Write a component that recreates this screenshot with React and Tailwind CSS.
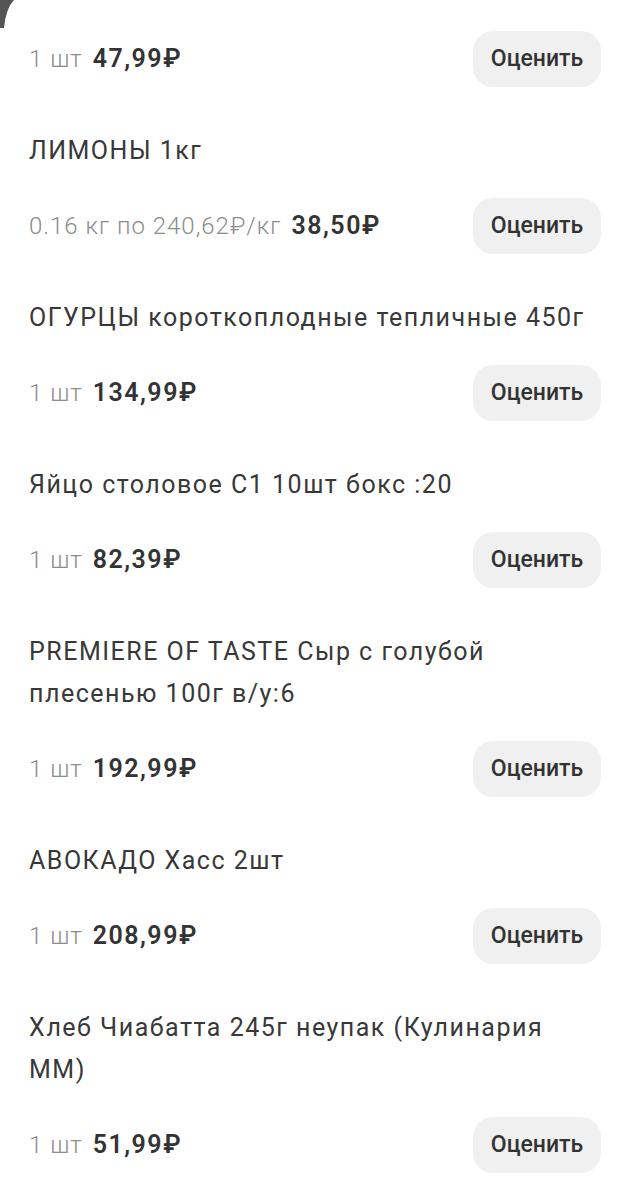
const items = [
  { title: null, qty: "1 шт", price: "47,99₽" },
  { title: "ЛИМОНЫ 1кг", qty: "0.16 кг по 240,62₽/кг", price: "38,50₽" },
  { title: "ОГУРЦЫ короткоплодные тепличные 450г", qty: "1 шт", price: "134,99₽" },
  { title: "Яйцо столовое С1 10шт бокс :20", qty: "1 шт", price: "82,39₽" },
  { title: "PREMIERE OF TASTE Сыр с голубой плесенью 100г в/у:6", qty: "1 шт", price: "192,99₽" },
  { title: "АВОКАДО Хасс 2шт", qty: "1 шт", price: "208,99₽" },
  { title: "Хлеб Чиабатта 245г неупак (Кулинария ММ)", qty: "1 шт", price: "51,99₽" },
];

const Item = ({ item, first }) => (
  <div className={first ? "pt-[31px]" : "pt-[43px]"}>
    {item.title && (
      <div className="text-[25px] leading-[42px] tracking-[1.5px] text-[#383838] mb-[26px]">
        {item.title}
      </div>
    )}
    <div className="flex items-center justify-between h-[56px]">
      <div className="flex items-baseline gap-[10px]">
        <span className="text-[24px] font-light tracking-[1px] text-[#8c8c8c]">{item.qty}</span>
        <span className="text-[25px] font-semibold tracking-[1.5px] text-[#333333]">{item.price}</span>
      </div>
      <button className="w-[128px] h-[56px] rounded-[20px] bg-[#f0f0f0] text-[23px] font-medium text-[#333333]">
        Оценить
      </button>
    </div>
  </div>
);

export default function App() {
  return (
    <div
      className="relative w-[619px] h-[1200px] bg-white overflow-hidden pl-[29px] pr-[18px]"
      style={{ fontFamily: "Roboto, 'Noto Sans', sans-serif" }}
    >
      {/* corner of the dark frame above */}
      <svg className="absolute left-0 top-0" width="20" height="30" viewBox="0 0 20 30">
        <path d="M0 0 H14 Q6 8 4 28 L0 28 Z" fill="#555555" />
      </svg>
      {items.map((item, i) => (
        <Item key={i} item={item} first={i === 0} />
      ))}
    </div>
  );
}
